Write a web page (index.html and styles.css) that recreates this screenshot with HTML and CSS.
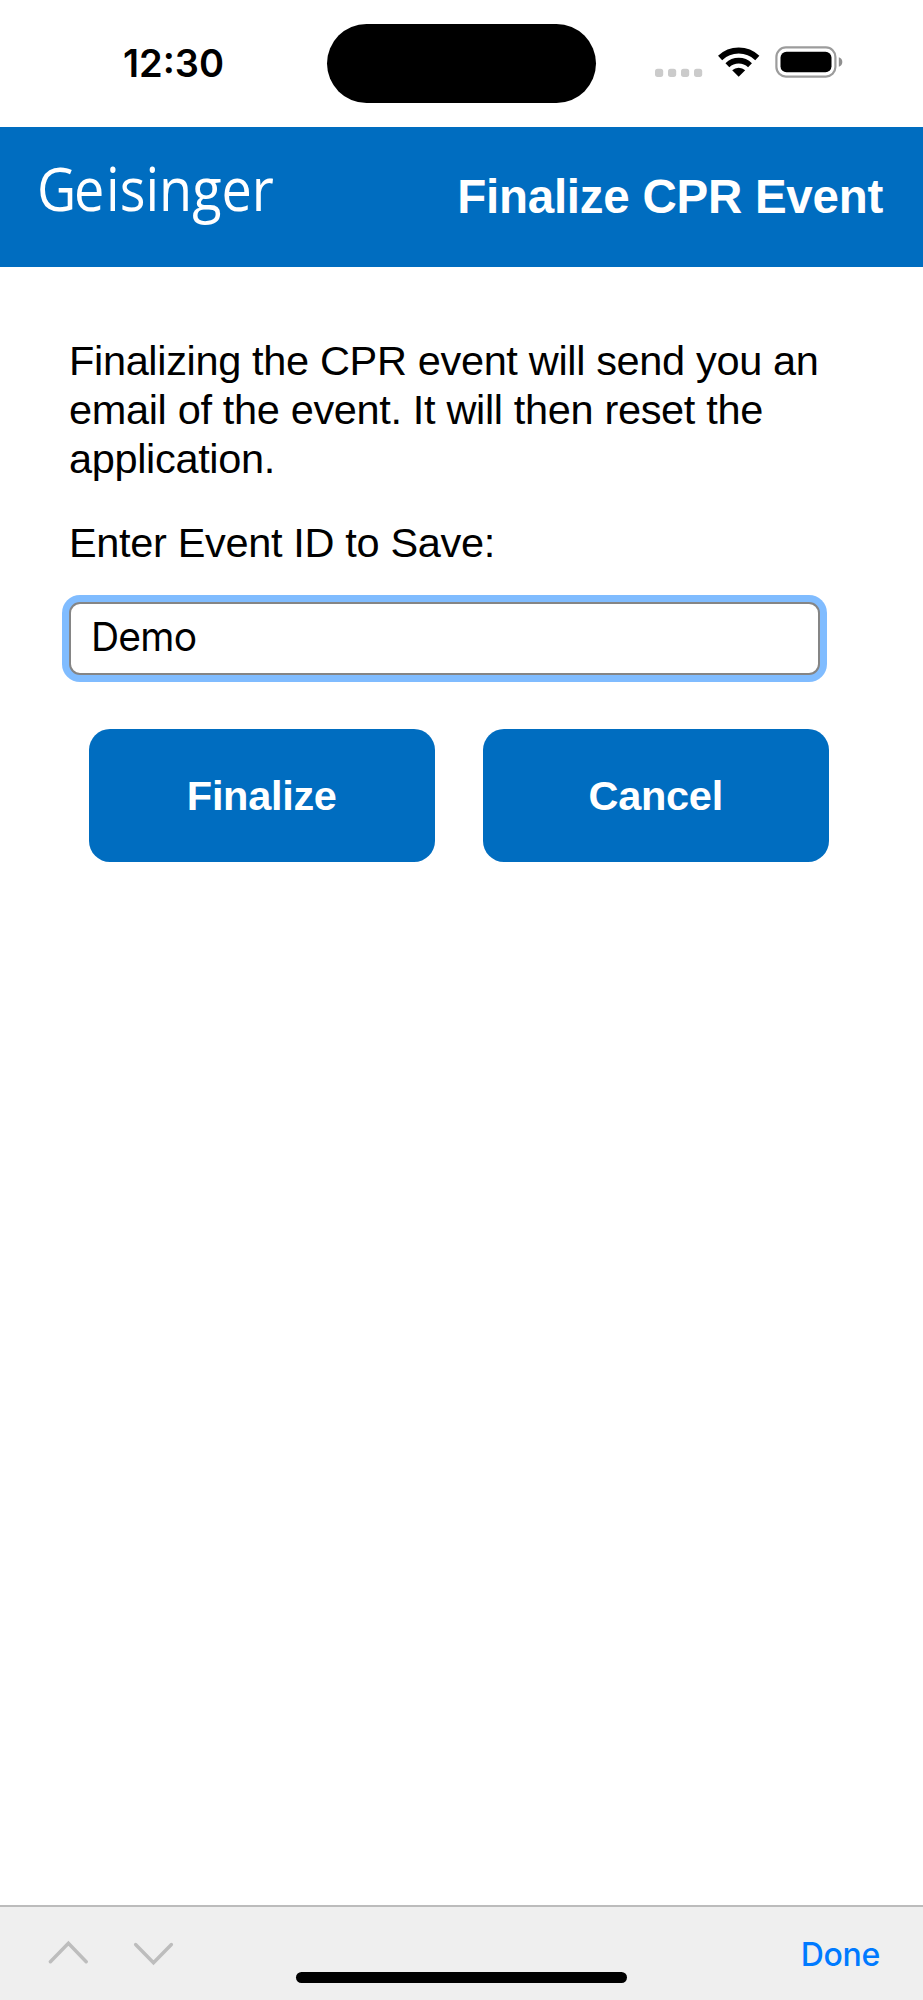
FILE: index.html
```html
<!DOCTYPE html>
<html lang="en">
<head>
<meta charset="utf-8">
<title>Finalize CPR Event</title>
<link rel="stylesheet" href="styles.css">
</head>
<body>
<div class="screen">
  <div class="status">
    <div class="time">12:30</div>
    <div class="island"></div>
    <svg class="indicators" width="190" height="34" viewBox="654 45 190 34">
      <g fill="#cbcbcb">
        <rect x="655" y="68.7" width="8.2" height="8.2" rx="2.6"/>
        <rect x="668" y="68.7" width="8.2" height="8.2" rx="2.6"/>
        <rect x="681" y="68.7" width="8.2" height="8.2" rx="2.6"/>
        <rect x="694" y="68.7" width="8.2" height="8.2" rx="2.6"/>
      </g>
      <g fill="none" stroke="#000" stroke-width="6">
        <path d="M720.1 58A27 27 0 0 1 757.3 58"/>
        <path d="M727.4 65.2A16.3 16.3 0 0 1 750 65.2" stroke-width="5.6"/>
      </g>
      <path d="M732.2 70.2A9.5 9.5 0 0 1 745.2 70.2L738.7 76.8Z"/>
      <rect x="776.4" y="47.4" width="59" height="29.2" rx="9.5" fill="none" stroke="#9c9c9c" stroke-width="2.2"/>
      <rect x="780.5" y="51.7" width="51" height="20.6" rx="6"/>
      <path d="M838.8 57.2C843.5 58.5 843.5 65.5 838.8 66.8Z" fill="#8f8f8f"/>
    </svg>
  </div>
  <header class="header">
    <svg class="logo" width="250" height="80" viewBox="0 0 250 80">
      <text transform="translate(-3 56.8) scale(.9 1)" dx="0 -2.5 2">Geisinger</text>
    </svg>
    <h1 class="title">Finalize CPR Event</h1>
  </header>
  <main class="content">
    <p class="copy">Finalizing the CPR event will send you an<br>email of the event. It will then reset the<br>application.</p>
    <label class="label" for="event">Enter Event ID to Save:</label>
    <input class="field" id="event" type="text" value="Demo">
    <div class="actions">
      <button class="button">Finalize</button>
      <button class="button">Cancel</button>
    </div>
  </main>
  <footer class="toolbar">
    <svg class="arrows" width="126" height="26" viewBox="48 1940 126 26" fill="none" stroke="#bdbdbd" stroke-width="3.4" stroke-linecap="round" stroke-linejoin="miter">
      <path d="M50.4 1961.8L68.4 1943.2L86.2 1961.8"/>
      <path d="M135.6 1944.5L153.5 1962.8L171.4 1944.5"/>
    </svg>
    <span class="done">Done</span>
    <div class="home"></div>
  </footer>
</div>
</body>
</html>
```
FILE: styles.css
```css
* { box-sizing: border-box; }
body { margin: 0; background: #fff; }
.screen {
  width: 923px;
  height: 2000px;
  display: flex;
  flex-direction: column;
  background: #fff;
  color: #000;
  font-family: "Liberation Sans", Arial, sans-serif;
  overflow: hidden;
}
.status {
  height: 126.6px;
  flex: none;
  display: flex;
  align-items: flex-start;
}
.time {
  width: 327px;
  padding: 40px 0 0 123px;
  font: 600 38px/46px Inter, sans-serif;
}
.island {
  width: 269px;
  height: 79px;
  margin-top: 24px;
  border-radius: 40px;
  background: #000;
}
.indicators { margin: 45px 0 0 58px; }
.header {
  height: 140.1px;
  flex: none;
  display: flex;
  justify-content: space-between;
  align-items: flex-start;
  padding: 27.4px 40px 0;
  background: #006dc0;
  color: #fff;
}
.logo { display: block; overflow: visible; }
.logo text {
  font-family: "Open Sans", "Noto Sans", sans-serif;
  font-size: 60px;
  font-weight: 400;
  fill: #fff;
}
.title {
  margin: 14px 0 0;
  font-size: 47.5px;
  line-height: 57px;
  letter-spacing: -0.25px;
  white-space: nowrap;
}
.content { flex: 1; padding: 66px 69px 0; }
.copy {
  margin: 3px 0 0;
  font-size: 41.5px;
  line-height: 49.3px;
  letter-spacing: -0.34px;
  white-space: nowrap;
}
.label {
  display: block;
  margin-top: 34px;
  font-size: 41.5px;
  line-height: 49.3px;
  letter-spacing: -0.34px;
}
.field {
  display: block;
  width: 750.5px;
  height: 73px;
  margin: 35px 0 0;
  padding: 0 20px 4px;
  border: 2.3px solid #858585;
  border-radius: 11px;
  outline: none;
  box-shadow: 0 0 0 7px #80bcff;
  background: #fff;
  color: #000;
  font: 400 39px Inter, sans-serif;
  letter-spacing: -0.8px;
}
.actions {
  display: flex;
  gap: 48.5px;
  margin: 54px 0 0 20px;
}
.button {
  width: 345.5px;
  height: 133px;
  padding: 2px 0 0;
  border: 0;
  border-radius: 21px;
  background: #006dc0;
  color: #fff;
  font: bold 41.5px "Liberation Sans", Arial, sans-serif;
  letter-spacing: -0.3px;
}
.toolbar {
  position: relative;
  height: 95px;
  flex: none;
  display: flex;
  justify-content: space-between;
  align-items: flex-start;
  padding: 0 43px 0 48px;
  border-top: 2px solid #bcbcbc;
  background: #efefef;
}
.arrows { margin-top: 33px; }
.done {
  margin-top: 28px;
  color: #007aff;
  font: 500 32px/40px Inter, sans-serif;
  letter-spacing: -0.3px;
}
.home {
  position: absolute;
  left: 296px;
  bottom: 17px;
  width: 331px;
  height: 11px;
  border-radius: 6px;
  background: #000;
}
```
